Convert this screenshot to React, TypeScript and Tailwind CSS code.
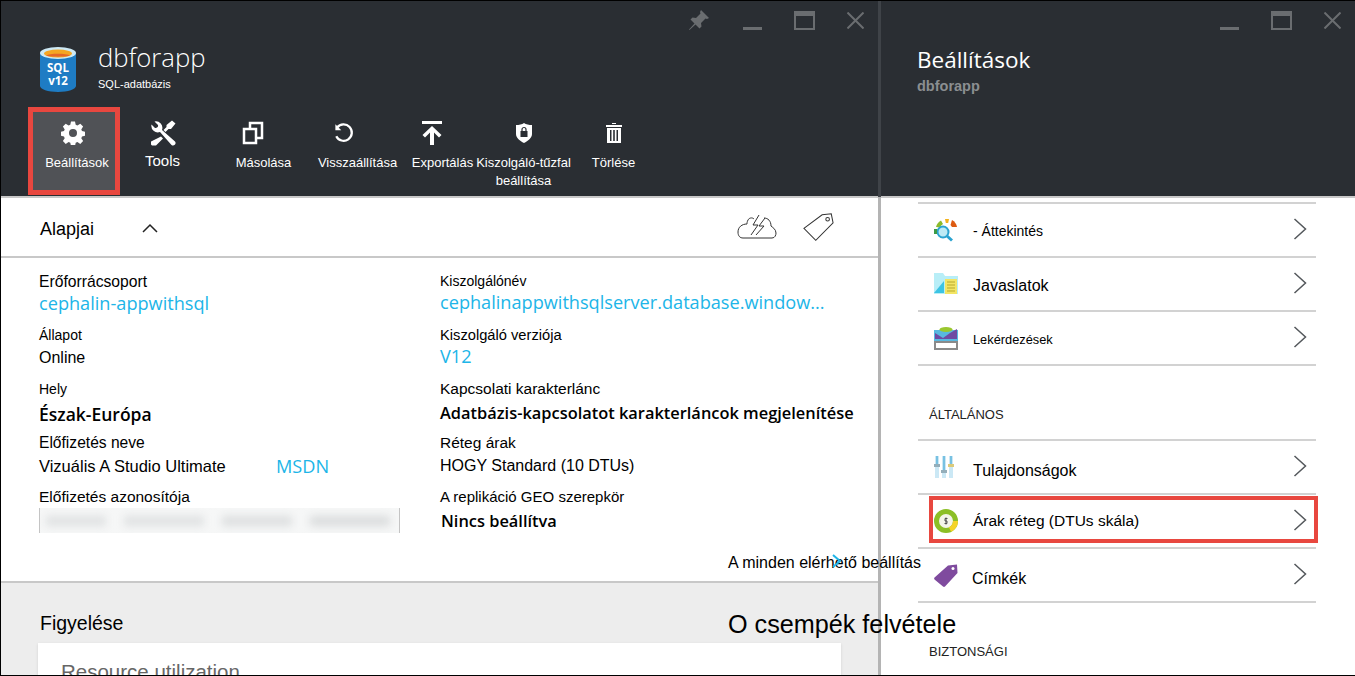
import { ReactNode } from "react";

const sans = "font-['Liberation_Sans',Arial,sans-serif]";

// Window controls in the blade header
const WindowControls = ({ pin }: { pin?: boolean }) => (
  <div className="flex items-center justify-end h-[38px] text-[#6a6d70]">
    {pin && (
      <svg width="22" height="22" viewBox="0 0 22 22" className="mr-[33px]" fill="currentColor">
        <path d="M13 1 21 9 19 10 17.500 9.500 13 14 13.500 17.500 11.500 19.500 7.500 15.500 1.500 21 1 20.500 6.500 14.500 2.500 10.500 4.500 8.500 8 9 12.500 4.500 12 3Z" />
      </svg>
    )}
    <div className="w-[19px] h-[3px] mt-[16px] bg-current mr-[32px]" />
    <div className="w-[21px] h-[19px] border-2 border-t-[5px] border-current mr-[32px]" />
    <svg width="17" height="17" viewBox="0 0 17 17" stroke="currentColor" strokeWidth="2" className="mr-[14px]">
      <path d="M0.500 0.500 16.500 16.500M16.500 0.500 0.500 16.500" />
    </svg>
  </div>
);

const GearIcon = () => (
  <svg width="24" height="24" viewBox="0 0 24 24" fill="white">
    <path
      fillRule="evenodd"
      d="M10 0.500h4l.7 3.300 1.700.7 2.900-1.800 2.800 2.800-1.800 2.900.7 1.700 3.300.7v4l-3.300.7-.7 1.700 1.800 2.900-2.800 2.800-2.900-1.800-1.700.7-.7 3.300h-4l-.7-3.300-1.700-.7-2.900 1.800-2.800-2.800 1.800-2.900-.7-1.700-3.300-.7v-4l3.300-.7.7-1.700-1.800-2.900 2.800-2.800 2.900 1.800 1.700-.7ZM12 8a4 4 0 1 0 0 8 4 4 0 0 0 0-8Z"
    />
  </svg>
);

const ToolsIcon = () => (
  <svg width="26" height="26" viewBox="0 0 26 26" fill="white">
    <path d="M1.500 4.500 5 8a2.500 2.500 0 0 0 3-3L4.500 1.500a6.500 6.500 0 0 1 7.500 8.500L25 21.500a2.500 2.500 0 0 1-3.500 3.500L10 12a6.500 6.500 0 0 1-8.500-7.500Z" />
    <path d="M22 .5 25.500 3.500 21 9 18.500 9 15.500 12 13.500 10 16.500 7 16.500 5ZM11 16.500 13 18.500 6 25.500 2 25.500 1 24.500 1 21.500 Z" />
  </svg>
);

const CopyIcon = () => (
  <svg width="22" height="24" viewBox="0 0 22 24" fill="none" stroke="white" strokeWidth="2.500">
    <path d="M8 7V2h12v15h-5" />
    <rect x="2" y="8" width="12" height="14" />
  </svg>
);

const RestoreIcon = () => (
  <svg width="20" height="20" viewBox="0 0 22 22" fill="none" stroke="white" strokeWidth="2.500">
    <path d="M3.500 5A9 9 0 1 1 2.500 14.500" />
    <path d="M1.500 1.500V8H8Z" fill="white" stroke="none" />
  </svg>
);

const ExportIcon = () => (
  <svg width="22" height="24" viewBox="0 0 22 24" fill="white">
    <rect x="1" y="0" width="20" height="3" />
    <path d="M11 5 20.500 14 18 16.500 13 11.500V24H9V11.500L4 16.500 1.500 14Z" />
  </svg>
);

const ShieldIcon = () => (
  <svg width="16" height="20" viewBox="0 0 16 20">
    <path d="M8 0C10 1.500 13 2 16 2V11C16 15 12 18 8 20 4 18 0 15 0 11V2C3 2 6 1.500 8 0Z" fill="white" />
    <rect x="4.500" y="8" width="7" height="6" fill="#2a2e33" />
    <path d="M6 8V6.500a2 2 0 0 1 4 0V8" fill="none" stroke="#2a2e33" strokeWidth="1.200" />
  </svg>
);

const TrashIcon = () => (
  <svg width="16" height="20" viewBox="0 0 16 20" fill="white">
    <rect x="6" y="0" width="4" height="1" />
    <rect x="0" y="2" width="16" height="2" />
    <path
      fillRule="evenodd"
      d="M1 5h14v15H1ZM4 7v11h1.500V7Zm3.200 0v11h1.600V7Zm3.300 0v11H12V7Z"
    />
  </svg>
);

type CommandProps = {
  icon: ReactNode;
  label: ReactNode;
  width: string;
  iconClass?: string;
  labelClass?: string;
  active?: boolean;
};

const Command = ({ icon, label, width, iconClass = "", labelClass = "text-[13px] leading-[18px] mt-[9px]", active }: CommandProps) => (
  <div
    className={`${width} h-[88px] flex flex-col items-center text-white ${
      active ? "bg-[#505256] border-[5px] border-[#e8473f] pt-[9px]" : "pt-[14px]"
    }`}
  >
    <div className={`h-[24px] flex items-center justify-center ${iconClass}`}>{icon}</div>
    <div className={`${labelClass} text-center whitespace-nowrap ${active ? "ml-[6px]" : ""}`}>{label}</div>
  </div>
);

const Chevron = () => (
  <svg width="14" height="22" viewBox="0 0 14 22" fill="none" stroke="#54585c" strokeWidth="1.500">
    <path d="M1.500 1 12.500 11 1.500 21" />
  </svg>
);

// Coloured icons of the settings list
const OverviewIcon = () => (
  <svg width="24" height="24" viewBox="0 0 24 24">
    <path d="M2 9A10 10 0 0 1 7 2.500L9 6A6 6 0 0 0 6 9.500Z" fill="#8cbb2c" />
    <path d="M11 1h4l-.8 4h-2.400Z" fill="#f3b21c" />
    <path d="M18 2 a10 10 0 0 1 5 7h-5l-1.500-2Z" fill="#dd5b12" />
    <circle cx="9" cy="14" r="5.500" fill="#bdeaf5" stroke="#2aa3d0" strokeWidth="2" />
    <path d="M13 18 18 22.500" stroke="#2aa3d0" strokeWidth="3" />
    <rect x="0" y="11" width="3" height="5" fill="#3d9b46" />
  </svg>
);

const AdviceIcon = () => (
  <svg width="24" height="22" viewBox="0 0 24 22">
    <path d="M0 0h9l2 3h13v18H0Z" fill="#b8eef7" />
    <path d="M0 20 10 8v12Z" fill="#3cc4e4" />
    <rect x="11" y="6" width="12" height="15" fill="#f3e565" />
    <path d="M13 9h8M13 12h8M13 15h8M13 18h8" stroke="#b7a92c" strokeWidth="1" />
  </svg>
);

const QueryIcon = () => (
  <svg width="24" height="23" viewBox="0 0 24 23">
    <path d="M0 3h24v20H0Z" fill="#58b8e0" />
    <ellipse cx="12" cy="2.500" rx="6.500" ry="2.500" fill="#9ac72f" />
    <path d="M1 6 9 11 16 6 23 2V12H1Z" fill="#6f4aa3" />
    <rect x="1" y="15" width="22" height="7" fill="#fff" stroke="#8a8a8a" strokeWidth="2" />
  </svg>
);

const PropertiesIcon = () => (
  <svg width="20" height="22" viewBox="0 0 20 22" opacity="0.8">
    <rect x="1" y="0" width="4" height="22" fill="#bfe3f3" />
    <rect x="8" y="0" width="4" height="22" fill="#bfe3f3" />
    <rect x="15" y="0" width="4" height="22" fill="#bfe3f3" />
    <rect x="2.200" y="0" width="1.600" height="8" fill="#3ea6d6" />
    <rect x="9.200" y="0" width="1.600" height="14" fill="#3ea6d6" />
    <rect x="16.200" y="0" width="1.600" height="8" fill="#3ea6d6" />
    <rect x="0" y="8" width="6" height="3" fill="#7a9aaa" />
    <rect x="7" y="14" width="6" height="3" fill="#7a9aaa" />
    <rect x="14" y="8" width="6" height="3" fill="#d3bd5a" />
  </svg>
);

const PricingIcon = () => (
  <svg width="24" height="24" viewBox="0 0 24 24">
    <circle cx="12" cy="12" r="9.500" fill="#f4f4e8" stroke="#8cbf26" strokeWidth="5" />
    <path d="M21.500 12A9.500 9.500 0 0 1 16 20.500" fill="none" stroke="#f5d327" strokeWidth="5" />
    <circle cx="12" cy="12" r="5" fill="#f4f6ea" />
    <path d="M13.500 9.500h-2.500v2.500h2v2.500h-2.500M12 8.500v7" fill="none" stroke="#555" strokeWidth="1" />
  </svg>
);

const TagIcon = () => (
  <svg width="24" height="23" viewBox="0 0 24 23">
    <path d="M0 14 14 1.500 23 .5 23.500 9 11 22.500a1.500 1.500 0 0 1-2 0L.5 15.500Z" fill="#7f4b9e" />
    <circle cx="19" cy="4.500" r="1.500" fill="#fff" />
  </svg>
);

const Row = ({ icon, children, textClass = "text-[16px]" }: { icon: ReactNode; children: ReactNode; textClass?: string }) => (
  <div className="h-[54px] border-b-2 border-[#d2d2d2] flex items-center text-black">
    <div className="w-[55px] flex justify-start pl-[16px]">{icon}</div>
    <div className={`flex-1 ${textClass}`}>{children}</div>
    <div className="pr-[9px] flex items-center -mt-[2px]">
      <Chevron />
    </div>
  </div>
);

const Field = ({
  label,
  value,
  valueClass,
  labelClass = "text-[14px]",
}: {
  label: string;
  value: ReactNode;
  valueClass: string;
  labelClass?: string;
}) => (
  <div className="h-[54px] relative">
    <div className={`${labelClass} leading-[20px] text-black whitespace-nowrap`}>{label}</div>
    <div className={`${valueClass} whitespace-nowrap`}>{value}</div>
  </div>
);

const link = "font-['Open_Sans',sans-serif] text-[18.150px] leading-[24px] text-[#20b5e8]";
const strong = "font-['Open_Sans',sans-serif] font-semibold text-[16.400px] leading-[24px]";

export default function App() {
  return (
    <div className={`${sans} relative w-[1355px] h-[676px] overflow-hidden flex bg-white border-t border-l border-b border-black`}>
      {/* Main blade */}
      <div className="w-[877px] h-full flex flex-col shrink-0">
        <div className="h-[197px] bg-[#2a2e33] shrink-0 flex flex-col border-b-2 border-[#c8c8c8]">
          <WindowControls pin />
          <div className="flex h-[68px] pl-[39px]">
            <svg width="36" height="46" viewBox="0 0 36 46" className="mt-[8px]">
              <path d="M0 6V39C0 42 8 45 18 45S36 42 36 39V6Z" fill="#1e7cc4" />
              <ellipse cx="18" cy="6" rx="18" ry="6" fill="#cde9f5" />
              <ellipse cx="18" cy="6.500" rx="14" ry="4" fill="#f5a623" />
              <path d="M6 8.500C9 10 27 10 30 8.500 27 6 9 6 6 8.500Z" fill="#e4672a" />
              <text x="18" y="25" textAnchor="middle" fontSize="11.500" fontWeight="700" fill="#fff" fontFamily="'Open Sans',sans-serif">SQL</text>
              <text x="18" y="38" textAnchor="middle" fontSize="11.500" fontWeight="700" fill="#fff" fontFamily="'Open Sans',sans-serif">v12</text>
            </svg>
            <div className="ml-[22px] text-white">
              <div className="font-['Open_Sans',sans-serif] font-light text-[25.700px] leading-[32px] mt-[3px]">dbforapp</div>
              <div className="text-[11px] leading-[16px] mt-[2px]">SQL-adatbázis</div>
            </div>
          </div>
          <div className="flex pl-[27px]">
            <Command active width="w-[92px]" iconClass="mr-[2px]" icon={<GearIcon />} label="Beállítások" />
            <Command width="w-[85px]" icon={<ToolsIcon />} label="Tools" labelClass="text-[15px] leading-[18px] mt-[7px]" />
            <Command width="w-[117px]" iconClass="mr-[22px]" icon={<CopyIcon />} label="Másolása" />
            <Command width="w-[71px]" iconClass="mr-[28px]" icon={<RestoreIcon />} label="Visszaállítása" />
            <Command width="w-[99px]" iconClass="mr-[22px]" icon={<ExportIcon />} label="Exportálás" />
            <Command width="w-[63px]" icon={<ShieldIcon />} label={<>Kiszolgáló-tűzfal<br />beállítása</>} />
            <Command width="w-[117px]" icon={<TrashIcon />} label="Törlése" />
          </div>
        </div>

        {/* Essentials */}
        <div className="h-[385px] shrink-0 border-b-2 border-[#c8c8c8]">
          <div className="h-[60px] border-b-2 border-[#c8c8c8] flex items-center pl-[39px] pr-[44px]">
            <span className="text-[18px] text-black mt-[4px]">Alapjai</span>
            <svg width="16" height="10" viewBox="0 0 16 10" fill="none" stroke="#222" strokeWidth="1.500" className="ml-[48px] mt-[1px]">
              <path d="M1 9 8 2 15 9" />
            </svg>
            <div className="ml-auto flex items-center">
              <svg width="40" height="30" viewBox="0 0 40 30" fill="none" stroke="#333" strokeWidth="1">
                <path d="M17 7C15 5 12 6 11 8 10 10 10 11 10 12 5 12 1 15 1 20 1 24 3 26 6 26H35C38 26 39 23 39 21 39 17 35 15 34 14 34 9 31 6 27 6" />
                <path d="M22 3 16 13H21L14 23M28 6 22 14H27L19 23" />
              </svg>
              <svg width="31" height="31" viewBox="0 0 34 32" fill="none" stroke="#333" strokeWidth="1.100" className="ml-[26px]">
                <path d="M1 17 21 2 31 1 33 11 14 30Z" />
                <circle cx="27" cy="7" r="2" />
              </svg>
            </div>
          </div>
          <div className="grid grid-cols-[401px_1fr] pl-[38px] pt-[13px]">
            <Field label="Erőforrácsoport" labelClass="text-[15.700px] pt-[1px]" value="cephalin-appwithsql" valueClass={`${link} -mt-[1px]`} />
            <Field label="Kiszolgálónév" value="cephalinappwithsqlserver.database.window..." valueClass={`${link} -mt-[1px]`} />
            <Field label="Állapot" value="Online" valueClass="text-[16px] leading-[24px] mt-[1px]" />
            <Field label="Kiszolgáló verziója" labelClass="text-[14.700px]" value="V12" valueClass={`${link} -mt-[1px]`} />
            <Field label="Hely" value="Észak-Európa" valueClass={`${strong} !text-[17.500px] mt-[3px]`} />
            <Field label="Kapcsolati karakterlánc" labelClass="text-[15.500px]" value="Adatbázis-kapcsolatot karakterláncok megjelenítése" valueClass={`${strong} mt-[2px]`} />
            <Field
              label="Előfizetés neve"
              labelClass="text-[15.600px]"
              value={
                <span className="flex">
                  <span className="w-[237px]">Vizuális A Studio Ultimate</span>
                  <span className={link}>MSDN</span>
                </span>
              }
              valueClass="text-[16.500px] leading-[24px] mt-[1px]"
            />
            <Field label="Réteg árak" labelClass="text-[15.500px]" value="HOGY Standard (10 DTUs)" valueClass="text-[16px] leading-[24px] mt-[1px]" />
            <Field
              label="Előfizetés azonosítója"
              labelClass="text-[15.500px]"
              value={
                <div className="w-[361px] h-[25px] mt-[1px] border-x border-[#c4c4c4] overflow-hidden flex items-center gap-[18px] px-[6px] bg-[#f6f7f7]">
                  <div className="w-[60px] h-[10px] bg-[#dfe1e2] blur-[4px]" />
                  <div className="w-[80px] h-[10px] bg-[#dfe1e2] blur-[4px]" />
                  <div className="w-[70px] h-[10px] bg-[#dcdedf] blur-[4px]" />
                  <div className="w-[80px] h-[10px] bg-[#d9dbdc] blur-[4px]" />
                </div>
              }
              valueClass=""
            />
            <Field label="A replikáció GEO szerepkör" labelClass="text-[15px]" value="Nincs beállítva" valueClass={`${strong} mt-[2px] ml-[1px]`} />
          </div>
        </div>

        {/* Monitoring */}
        <div className="flex-1 bg-[#ededed] pl-[37px] pr-[37px] pt-[28px] overflow-hidden">
          <div className="text-[19.500px] leading-[24px] text-black pl-[2px]">Figyelése</div>
          <div className="h-[60px] bg-white mt-[8px] pl-[23px] pt-[16px] shadow-sm">
            <div className="text-[20.500px] leading-[26px] text-[#666]">Resource utilization</div>
          </div>
        </div>
      </div>

      {/* Divider */}
      <div className="w-[3px] h-full shrink-0 flex flex-col">
        <div className="h-[196px] bg-[#3f4348]" />
        <div className="flex-1 bg-[#b4b4b4]" />
      </div>

      {/* Settings blade */}
      <div className="flex-1 h-full flex flex-col min-w-0">
        <div className="h-[197px] bg-[#2a2e33] shrink-0 border-b-2 border-[#c8c8c8]">
          <WindowControls />
          <div className="pl-[36px] mt-[6px]">
            <div className="font-['Open_Sans',sans-serif] text-[22.500px] leading-[30px] text-white">Beállítások</div>
            <div className="text-[14.500px] leading-[18px] font-bold text-[#8b8e91] mt-[2px]">dbforapp</div>
          </div>
        </div>
        <div className="pl-[37px] pr-[39px] pt-[4px]">
          <div className="border-t-2 border-[#d2d2d2]">
            <Row icon={<OverviewIcon />} textClass="text-[14px] mt-[2px]">- Áttekintés</Row>
            <Row icon={<AdviceIcon />} textClass="text-[16px] mt-[4px]">Javaslatok</Row>
            <Row icon={<QueryIcon />} textClass="text-[12.800px] mt-[4px]">Lekérdezések</Row>
          </div>
          <div className="h-[73px] pt-[41px] pl-[11px] text-[13px] leading-[16px] text-[#222]">ÁLTALÁNOS</div>
          <div className="border-t-2 border-[#d2d2d2]">
            <Row icon={<PropertiesIcon />} textClass="text-[16px] mt-[8px]">Tulajdonságok</Row>
            <div className="relative">
              <Row icon={<PricingIcon />} textClass="text-[15.500px]">Árak réteg (DTUs skála)</Row>
              <div className="absolute left-[11px] top-[1px] w-[389px] h-[47px] border-[4px] border-[#e8473f]" />
            </div>
            <Row icon={<TagIcon />} textClass="text-[16px] mt-[8px] -ml-[1px]">Címkék</Row>
          </div>
          <div className="pt-[41px] pl-[11px] text-[13px] leading-[16px] text-[#222]">BIZTONSÁGI</div>
        </div>
      </div>

      {/* Links that sit over the blade divider */}
      <div className="absolute left-[727px] top-[552px] text-[16px] leading-[20px] text-black whitespace-nowrap">
        A minden elérhető beállítás
      </div>
      <svg width="10" height="14" viewBox="0 0 10 14" fill="none" stroke="#20b5e8" strokeWidth="2" className="absolute left-[831px] top-[553px]">
        <path d="M1 1 8 7 1 13" />
      </svg>
      <div className="absolute left-[727px] top-[608px] text-[25.200px] leading-[30px] text-black whitespace-nowrap">
        O csempék felvétele
      </div>
    </div>
  );
}
